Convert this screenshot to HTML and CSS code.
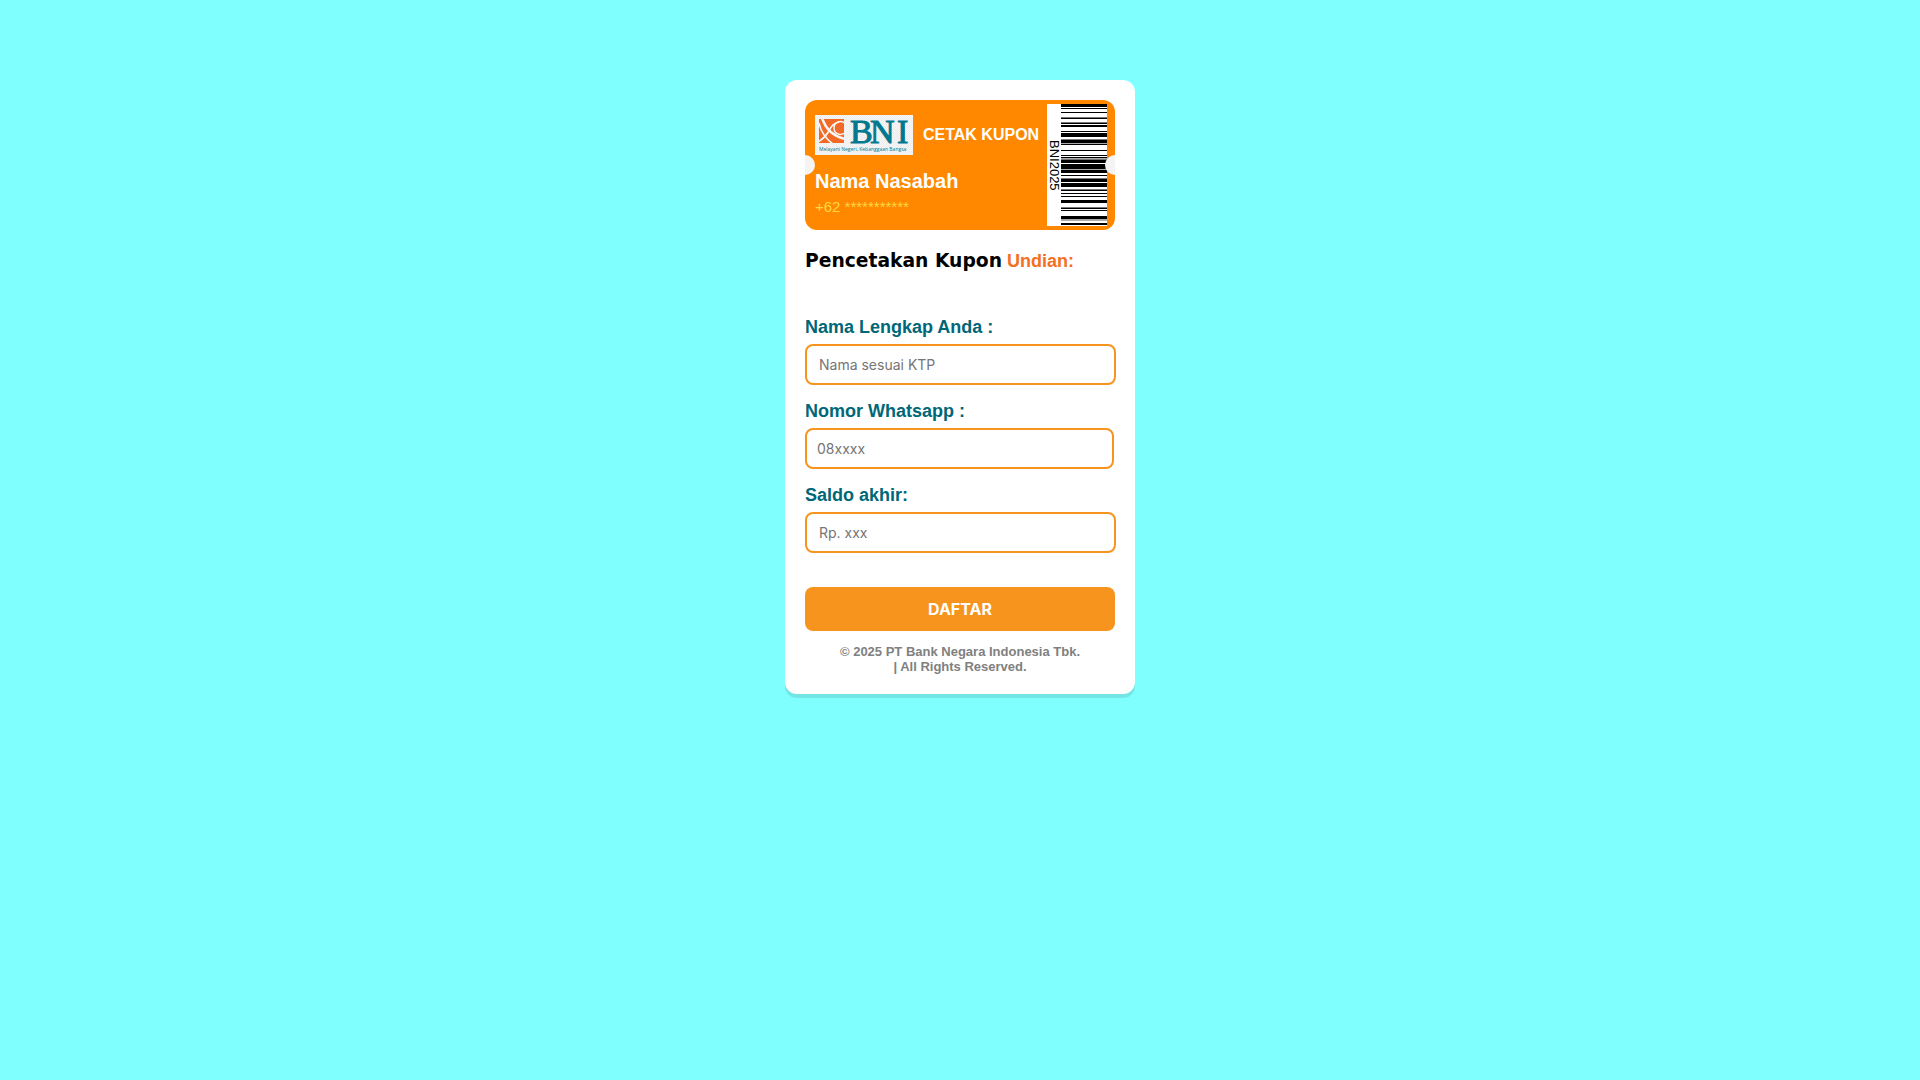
FILE: index.html
```html
<!DOCTYPE html>
<html lang="id">
<head>
	<meta charset="utf-8">
	<meta name="viewport" content="width=device-width, initial-scale=1.0">
	<title>Cetak Kupon Undian</title>
	<link rel="stylesheet" href="styles.css">
</head>
<body>
	<div class="container">

		<div class="ticket">
			<div class="ticket-info">
				<div class="ticket-top">
					<svg class="logo" viewBox="0 0 98 40" role="img" aria-label="BNI">
						<defs>
							<pattern id="grid" width="2" height="2" patternUnits="userSpaceOnUse">
								<rect width="2" height="2" fill="#f7f7f7"/>
								<rect width="1" height="1" fill="#ececec"/>
								<rect x="1" y="1" width="1" height="1" fill="#ececec"/>
							</pattern>
							<clipPath id="mark"><rect x="4" y="4" width="25" height="24"/></clipPath>
						</defs>
						<rect width="98" height="40" fill="url(#grid)"/>
						<g clip-path="url(#mark)">
							<rect x="4" y="4" width="25" height="24" fill="#f26a25"/>
							<g fill="none" stroke="#f7f7f7">
								<path d="M4 8c2 9 7 16 14 21" stroke-width="1.5"/>
								<path d="M7 3c3 9 10 18 23 21" stroke-width="2.5"/>
								<path d="M3 27c5-3 8-6 11-11c2-5 5-8 10-9" stroke-width="1.5"/>
								<path d="M30 8c-5-3-11-1-11 5c0 6 6 8 11 5" stroke-width="1.5"/>
							</g>
						</g>
						<text x="35 55 82" y="28" font-size="34" font-family="Liberation Serif, serif" fill="#00788f" stroke="#00788f">BNI</text>
						<text x="4" y="36" font-size="5" font-family="Open Sans, sans-serif" fill="#00788f">Melayani Negeri, Kebanggaan Bangsa</text>
					</svg>
					<span class="ticket-title">CETAK KUPON</span>
				</div>
				<div class="ticket-name">Nama Nasabah</div>
				<div class="ticket-phone">+62 ***********</div>
			</div>
			<div class="barcode">
				<span>BNI2025</span>
				<svg viewBox="0 0 46 122" width="46" height="122" shape-rendering="crispEdges" aria-hidden="true">
					<path fill="#000" d="M0 0h46v3H0zM0 4h46v1H0zM0 8h46v1H0zM0 14h46v1H0zM0 19h46v1H0zM0 21h46v2H0zM0 27h46v1H0zM0 29h46v4H0zM0 36h46v3H0zM0 40h46v1H0zM0 46h46v1H0zM0 51h46v1H0zM0 53h46v1H0zM0 56h46v3H0zM0 60h46v5H0zM0 66h46v3H0zM0 71h46v1H0zM0 75h46v3H0zM0 79h46v4H0zM0 86h46v1H0zM0 89h46v1H0zM0 92h46v1H0zM0 96h46v3H0zM0 104h46v1H0zM0 106h46v1H0zM0 112h46v3H0zM0 119h46v2H0z"/>
					<path fill="#777" d="M0 13h46v1H0zM0 18h46v1H0zM0 35h46v1H0zM0 55h46v1H0zM0 74h46v1H0zM0 85h46v1H0zM0 103h46v1H0z"/>
					<path fill="#aaa" d="M0 39h46v1H0zM0 54h46v1H0zM0 65h46v1H0zM0 115h46v2H0z"/>
				</svg>
			</div>
		</div>

		<h3>Pencetakan Kupon<span> Undian:</span></h3>

		<form>
			<label for="nama">Nama Lengkap Anda :</label>
			<input type="text" id="nama" placeholder="Nama sesuai KTP">

			<label for="nomor">Nomor Whatsapp :</label>
			<input type="tel" id="nomor" class="phone" placeholder="08xxxx">

			<label for="saldo">Saldo akhir:</label>
			<input type="text" id="saldo" placeholder="Rp. xxx">

			<button type="submit">DAFTAR</button>
		</form>

		<footer>© 2025 PT Bank Negara Indonesia Tbk.<br>| All Rights Reserved.</footer>
	</div>
</body>
</html>
```
FILE: styles.css
```css
* {
	box-sizing: border-box;
}

body {
	margin: 0;
	padding: 80px 20px;
	background-color: #80ffff;
	font-family: "Liberation Sans", Arial, sans-serif;
}

.container {
	max-width: 350px;
	margin: 0 auto;
	padding: 20px;
	background-color: #fff;
	border-radius: 12px;
	box-shadow: 0 4px 0 rgba(0, 0, 0, 0.1);
}

/* ticket */
.ticket {
	position: relative;
	display: flex;
	justify-content: space-between;
	padding: 4px 8px 4px 10px;
	background-color: #ff8800;
	border-radius: 12px;
	overflow: hidden;
}

/* punched holes on both sides */
.ticket::before,
.ticket::after {
	content: "";
	position: absolute;
	top: 55px;
	width: 20px;
	height: 20px;
	background-color: #f4f4f4;
	border-radius: 50%;
}

.ticket::before {
	left: -10px;
}

.ticket::after {
	right: -10px;
}

.ticket-info {
	padding-top: 11px;
	white-space: nowrap;
}

.ticket-top {
	display: flex;
	align-items: center;
	gap: 10px;
}

.logo {
	width: 98px;
	height: 40px;
}

.ticket-title {
	color: #fff;
	font-size: 16px;
	font-weight: bold;
}

.ticket-name {
	margin-top: 15px;
	color: #fff;
	font-size: 20px;
	font-weight: bold;
	line-height: 23px;
}

.ticket-phone {
	margin-top: 5px;
	color: #ffd740;
	font-size: 15px;
	line-height: 17px;
}

.barcode {
	display: flex;
	width: 60px;
	height: 122px;
	background-color: #fff;
}

.barcode span {
	width: 14px;
	font-size: 13px;
	line-height: 14px;
	text-align: center;
	writing-mode: vertical-rl;
}

/* form */
h3 {
	margin: 19px 0 43px;
	font-family: "DejaVu Sans", sans-serif;
	line-height: 23px;
}

h3 span {
	color: #f37021;
	font-family: "Liberation Sans", Arial, sans-serif;
	font-size: 18px;
}

label {
	display: block;
	margin-bottom: 6px;
	color: #006778;
	font-size: 18px;
	font-weight: bold;
	line-height: 22px;
}

input {
	display: block;
	width: calc(100% + 1px);
	height: 41px;
	margin-bottom: 15px;
	padding: 0 12px;
	border: 2px solid #f7941d;
	border-radius: 8px;
	font-family: Inter, sans-serif;
	font-size: 14px;
}

input.phone {
	width: calc(100% - 1px);
	padding: 0 10px;
}

button {
	display: block;
	width: 100%;
	height: 44px;
	margin-top: 34px;
	border: none;
	border-radius: 8px;
	background-color: #f7941d;
	color: #fff;
	font-family: Inter, sans-serif;
	font-size: 16px;
	font-weight: bold;
	cursor: pointer;
}

footer {
	margin-top: 13px;
	color: #808080;
	font-size: 13px;
	font-weight: bold;
	line-height: 15px;
	text-align: center;
}
```
